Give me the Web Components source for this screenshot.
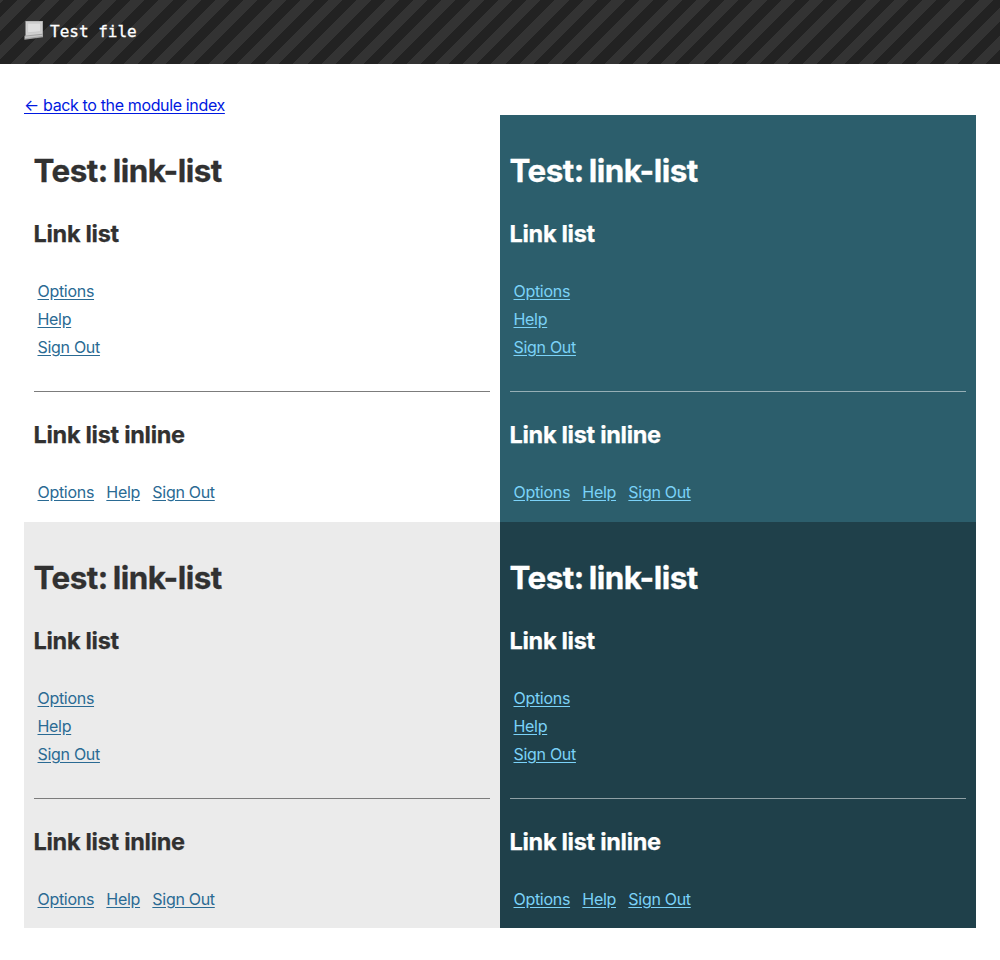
<!DOCTYPE html>
<html lang="en"><head><meta charset="utf-8"><title>Test file</title>
<style>
html,body{margin:0;background:#fff}
body{font:16px/24px Inter,sans-serif;color:#313131}
main{padding:29px 24px 32px}
.grid{display:grid;grid-template-columns:476px 476px;grid-template-rows:407px 406px}
.back{display:block;height:22px;line-height:24px}
.back a{color:#0019e0;text-underline-offset:2px;letter-spacing:-.36px}
</style></head><body>
<test-header>Test file</test-header>
<main><div class="back"><a href="#">← back to the module index</a></div>
<div class="grid">
<test-panel></test-panel>
<test-panel style="--bg:#2c5e6c;--fg:#fff;--link:#7bd2f8;--rule:#96afb6"></test-panel>
<test-panel style="--bg:#ebebeb"></test-panel>
<test-panel style="--bg:#1f404a;--fg:#fff;--link:#7bd2f8;--rule:#8fa0a5"></test-panel>
</div></main>
<script>
customElements.define('test-header',class extends HTMLElement{constructor(){super();this.attachShadow({mode:'open'}).innerHTML=`
<style>:host{display:flex;box-sizing:border-box;height:64px;padding:0 24px;align-items:center;background:repeating-linear-gradient(-45deg,#222 0 10px,#333 10px 20px);color:#fff;font:16px/24px "DejaVu Sans Mono",monospace}
svg{width:20px;height:20px;margin-right:6px;margin-top:-4px}span{margin-top:-1px;-webkit-text-stroke:.3px #fff}</style>
<svg viewBox="0 0 20 20"><path d="M1.3 1h17.7v16.3L.4 19.7V15.8l.9-.6z" fill="#a0a0a0"/><path d="M2 1.6h16.2v12.2L2 15.4z" fill="#cfcfcf"/><path d="M3.6 3.2h13v8.4l-13 1.2z" fill="#dedede" stroke="#c2c2c2" stroke-width=".6"/><path d="M1 16.6l17.4-1.8v1.2L1 18.2z" fill="#c4c4c4"/></svg><span><slot></slot></span>`}});
customElements.define('link-list',class extends HTMLElement{constructor(){super();this.attachShadow({mode:'open'}).innerHTML=`
<style>:host{display:flex;flex-direction:column;align-items:flex-start;padding-left:3.5px}
:host([inline]){flex-direction:row;gap:12.3px}
a{color:var(--link,#2a6a93);line-height:28px;letter-spacing:-.3px;text-underline-offset:2px}</style>
<a href="#">Options</a><a href="#">Help</a><a href="#">Sign Out</a>`}});
customElements.define('test-panel',class extends HTMLElement{constructor(){super();this.attachShadow({mode:'open'}).innerHTML=`
<style>:host{display:block;box-sizing:border-box;padding:36px 10px 0;background:var(--bg,#fff);color:var(--fg,#313131)}
h1{font-size:31.4px;line-height:40px;margin:0 0 28px -.5px;letter-spacing:-.53px;word-spacing:-1.8px;-webkit-text-stroke:.3px currentColor}
h2{font-size:23.5px;line-height:30px;margin:0 0 0 -.5px;letter-spacing:-.29px;-webkit-text-stroke:.25px currentColor}
link-list{margin-top:28px}
hr{border:0;border-top:1px solid var(--rule,#7c7c7c);margin:30px 0 28px}</style>
<h1>Test: link-list</h1><h2>Link list</h2><link-list></link-list><hr><h2>Link list inline</h2><link-list inline></link-list>`}});
</script></body></html>
